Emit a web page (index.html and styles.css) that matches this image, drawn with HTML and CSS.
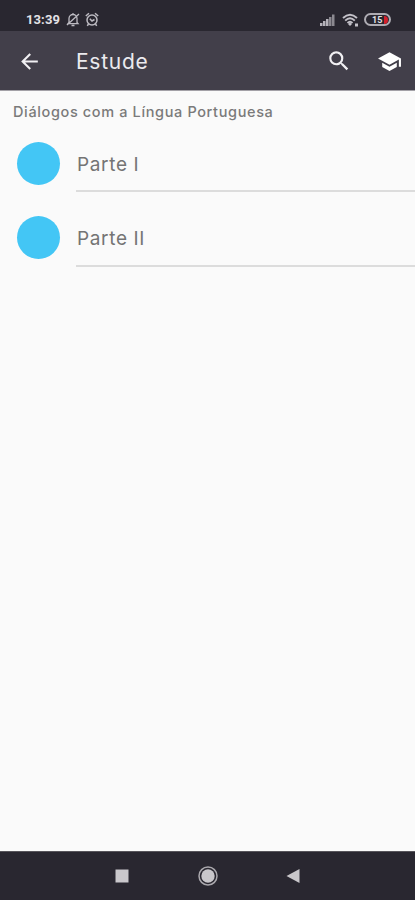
FILE: index.html
```html
<!DOCTYPE html>
<html lang="pt">
<head>
<meta charset="utf-8">
<title>Estude</title>
<link rel="stylesheet" href="styles.css">
</head>
<body>
<div class="status">
  <span class="clock">13:39</span>
  <svg class="mute" width="14" height="15" viewBox="0 0 14 15" fill="none" stroke="#bdbbc2" stroke-width="1.3"><path d="M3 10.500V6.500a4 4 0 0 1 8 0v4l1 1.200H2zM5.500 13.500h3M7 1v1.500M1 13L13 2"/></svg>
  <svg class="alarm" width="14" height="15" viewBox="0 0 14 15" fill="none" stroke="#bdbbc2" stroke-width="1.500"><circle cx="7" cy="8" r="5"/><path d="M.8 4L4 1.200M13.200 4L10 1.200M4.800 6.800L7 9l2.500-1.500M3.500 12l-1.200 1.800M10.500 12l1.200 1.800"/></svg>
  <svg class="signal" width="16" height="12" viewBox="0 0 16 12" fill="#b5b3ba"><path d="M0 9h2.500v3H0zM3 7h2.500v5H3zM6 5h2.500v7H6z"/><path fill="#8b8990" d="M9 3h2.500v9H9zM12 .5h2.500V12H12z"/></svg>
  <svg class="wifi" width="17" height="14" viewBox="0 0 17 14" fill="none" stroke="#c3c1c8" stroke-width="1.900"><path d="M1 5Q8 -1.500 15 5M3.200 7.600Q8 3 12.800 7.600M5.500 10Q8 7.600 10.500 10"/><path fill="#c3c1c8" stroke="none" d="M8 9.500l2 1.500-2 2-2-2zM13 10.500h3v3h-3z"/></svg>
  <span class="battery"><span class="level">15</span><span class="low"></span></span>
</div>
<header class="bar">
  <svg class="back" width="25" height="25" viewBox="0 0 24 24" fill="#f1f0f3"><path d="M20 11H7.830l5.590-5.590L12 4l-8 8 8 8 1.410-1.410L7.830 13H20z"/></svg>
  <h1>Estude</h1>
  <svg class="search" width="26" height="26" viewBox="0 0 24 24" fill="#f1f0f3"><path d="M15.500 14h-.79l-.28-.27A6.471 6.471 0 0 0 16 9.500 6.500 6.500 0 1 0 9.500 16c1.610 0 3.090-.59 4.230-1.570l.27.280v.79l5 4.990L20.490 19l-4.990-5zm-6 0C7.010 14 5 11.990 5 9.500S7.010 5 9.500 5 14 7.010 14 9.500 11.990 14 9.500 14z"/></svg>
  <svg class="cap" width="25" height="25" viewBox="0 0 24 24" fill="#fff"><path d="M5 13.180v4L12 21l7-3.820v-4L12 17l-7-3.820zM12 3L1 9l11 6 9-4.910V17h2V9L12 3z"/></svg>
</header>
<main>
  <h2>Diálogos com a Língua Portuguesa</h2>
  <div class="row"><span class="dot"></span><span class="label">Parte I</span></div>
  <div class="row"><span class="dot"></span><span class="label">Parte II</span></div>
</main>
<nav>
  <svg width="20" height="22" viewBox="0 0 20 22"><path fill="#c9c7cb" d="M3.500 4.500h13v13h-13z"/></svg>
  <svg width="22" height="22" viewBox="0 0 22 22"><circle cx="11" cy="11" r="9" fill="none" stroke="#aaa8ad" stroke-width="1.500"/><circle cx="11" cy="11" r="6.700" fill="#c9c7cb"/></svg>
  <svg width="20" height="22" viewBox="0 0 20 22"><path fill="#c9c7cb" d="M2.500 11l13-7v14z"/></svg>
</nav>
</body>
</html>
```
FILE: styles.css
```css
* { box-sizing: border-box; }
body {
  margin: 0;
  height: 900px;
  display: flex;
  flex-direction: column;
  background: #fafafa;
  font-family: Inter, sans-serif;
  overflow: hidden;
}
svg { display: block; flex: none; }
.status {
  height: 31px;
  padding: 8px 24px 0 26px;
  display: flex;
  align-items: center;
  background: #292730;
}
.clock {
  width: 40px;
  color: #e3e2e6;
  font: 700 13px/16px Roboto, sans-serif;
  letter-spacing: .1px;
}
.alarm { margin-left: 5px; }
.signal { margin-left: auto; }
.wifi { margin-left: 6px; }
.battery {
  width: 27px;
  height: 13px;
  margin-left: 5px;
  padding: 0 1px 0 6px;
  display: flex;
  align-items: center;
  justify-content: space-between;
  border: 2px solid #aeacb3;
  border-radius: 7px;
}
.level { color: #e3e2e6; font: 700 9px/10px Roboto, sans-serif; }
.low { width: 4px; height: 8px; border-radius: 0 4px 4px 0; background: #d21f2b; }
.bar {
  height: 59px;
  padding: 2px 13px 0 17px;
  display: flex;
  align-items: center;
  background: #423f4a;
}
.bar svg { margin-top: -1px; }
h1 {
  margin: 0 0 0 34px;
  color: #ebeaee;
  font-size: 21px;
  font-weight: 400;
  line-height: 28px;
  letter-spacing: .75px;
}
.search { margin-left: auto; }
.cap { margin-left: 25px; }
main { flex: 1; border-top: 1px solid #a3a1a7; }
h2 {
  margin: 0;
  height: 36px;
  padding: 11px 0 0 13px;
  color: #7a7a7a;
  font-size: 14.500px;
  font-weight: 500;
  line-height: 20px;
  letter-spacing: .63px;
  white-space: nowrap;
}
.row { height: 75px; display: flex; padding-left: 17px; }
.dot {
  width: 43px;
  height: 43px;
  margin: 15px 16px 0 0;
  flex: none;
  border-radius: 50%;
  background: #43c6f5;
}
.row + .row .dot { margin-top: 14px; }
.label {
  flex: 1;
  height: 65px;
  padding: 24px 0 0 1px;
  border-bottom: 2px solid #dcdcdc;
  color: #747474;
  font-size: 19px;
  font-weight: 400;
  line-height: 28px;
  letter-spacing: .65px;
}
.row + .row .label { padding-top: 23px; }
nav {
  height: 49px;
  padding-left: 112px;
  display: flex;
  gap: 65px;
  align-items: center;
  background: #292730;
  border-top: 1px solid #57555b;
}
```
